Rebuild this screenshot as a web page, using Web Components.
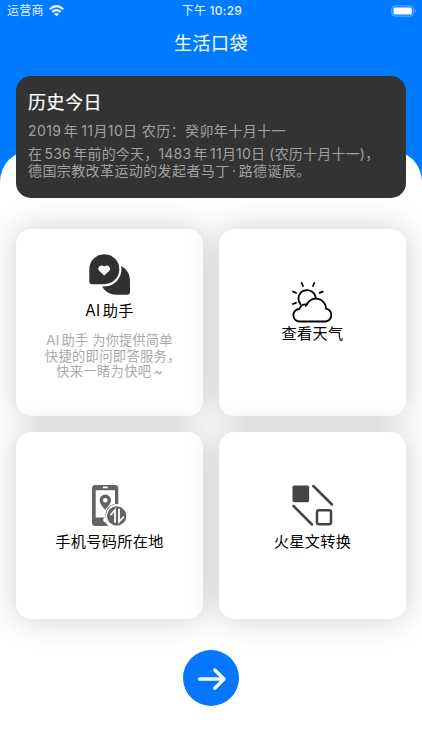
<!DOCTYPE html>
<html lang="zh-CN">
<head>
<meta charset="utf-8">
<title>生活口袋</title>
<style>
html,body{margin:0;height:100%}
body{font-family:Inter,"Noto Sans CJK SC",sans-serif;background:#fff;overflow:hidden}
</style>
</head>
<body>
<pocket-app></pocket-app>
<script>
const define = (name, html) => {
  const t = document.createElement('template');
  t.innerHTML = html;
  customElements.define(name, class extends HTMLElement {
    constructor() {
      super();
      this.attachShadow({ mode: 'open' }).append(t.content.cloneNode(true));
    }
  });
};

define('status-bar', `
<style>
:host{display:grid;grid-template-columns:1fr auto 1fr;align-items:center;height:22px;padding:0 5px 0 7px;color:#e4f1ff;font-size:12px;line-height:22px}
.left{display:flex;align-items:center;gap:5px}
.left span{letter-spacing:.3px}
.time{font-weight:500;letter-spacing:.3px}
.time b{font-weight:400;margin-right:3px}
.battery{justify-self:end}
svg{display:block}
</style>
<div class="left"><span>运营商</span>
<svg width="15" height="12" viewBox="0 0 15 12" fill="none" stroke="#f2f8ff" stroke-width="2.200"><path d="M.8 4.300Q7.500-1.900 14.200 4.300"/><path d="M3.300 7Q7.500 3.100 11.700 7"/><path d="M7.500 11.300 5 8.900Q7.500 7 10 8.900Z" fill="#f2f8ff" stroke="none"/></svg></div>
<div class="time"><b>下午</b>10:29</div>
<svg class="battery" width="26" height="12" viewBox="0 0 26 12"><rect x=".9" y=".9" width="21.400" height="10.200" rx="3" fill="none" stroke="#6fb3ff" stroke-width="1"/><rect x="2.500" y="2.500" width="18.300" height="7" rx="1.500" fill="#fff"/><path d="M23.800 4.200v3.600q1.200-.5 1.200-1.800t-1.200-1.800z" fill="#6fb3ff"/></svg>`);

define('nav-title', `
<style>:host{display:block;height:54px;line-height:43px;text-align:center;color:#eef8ff;font-size:18px;-webkit-text-stroke:.12px;letter-spacing:.5px}</style><slot></slot>`);

define('today-card', `
<style>
:host{display:block;box-sizing:border-box;height:122px;padding:13px 12px;border-radius:15px;background:#333;color:#a1a1a1;font-size:14px;letter-spacing:.4px;white-space:nowrap}
h1{margin:0;font-size:18px;font-weight:400;-webkit-text-stroke:.2px;line-height:27px;letter-spacing:.5px;color:#fff}
.date{line-height:20px;margin-top:5px}
.body{line-height:17px;margin-top:4px}
</style>
<h1><slot name="title"></slot></h1><div class="date"><slot name="date"></slot></div><div class="body"><slot></slot></div>`);

define('tool-card', `
<style>
:host{display:flex;flex-direction:column;align-items:center;box-sizing:border-box;height:187px;padding-top:var(--top,53px);border-radius:15px;background:#fff;box-shadow:0 0 32px rgba(0,0,0,.2);color:#000}
.icon{height:41px;margin-bottom:var(--gap,5px)}
.label{font-size:15.200px;line-height:22px;letter-spacing:.3px;white-space:nowrap}
::slotted(svg){display:block}
::slotted(p){margin:11px 0 0;text-align:center;font-size:13.300px;line-height:15.700px;letter-spacing:.3px;color:#aaa;white-space:nowrap}
</style>
<div class="icon"><slot name="icon"></slot></div><div class="label"><slot></slot></div><slot name="note"></slot>`);

define('next-button', `
<style>:host{display:block;width:56px;height:56px;margin:31px auto 0;border-radius:50%;background:#0577ff}svg{display:block}</style>
<svg width="56" height="56" viewBox="0 0 56 56" fill="none" stroke="#f4faff" stroke-width="3.400" stroke-linecap="round" stroke-linejoin="round"><path d="M16.600 29H41M31.800 20 41 29 31.800 38.200"/></svg>`);

define('pocket-app', `
<style>
:host{display:block;height:750px;background:linear-gradient(#007aff 0 185px,#fff 185px)}
.sheet{height:600px;margin:74px 0 0;border-radius:32px 32px 0 0;background:#fff}
header{height:76px}
main{padding:0 16px;z-index:1}
.stage{display:grid}
.stage>*{grid-area:1/1;min-width:0}
.grid{display:grid;grid-template-columns:187px 187px;gap:16px;margin-top:31px}
.ai{--top:25px;--gap:5px}
.weather{--gap:0px}
/* narrow gap between Latin and Han runs */
i{margin-left:2.300px}
.tight{word-spacing:-2px}
/* trailing comma set at half width */
.half{font-feature-settings:"halt"}
.pull{margin-left:-3.500px}
</style>
<header><status-bar></status-bar><nav-title>生活口袋</nav-title></header>
<div class="stage">
<div class="sheet"></div>
<main>
<today-card><span slot="title">历史今日</span><span slot="date">2019<i></i>年<i></i> <span class="pull">11月10日</span> 农历：癸卯年十月十一</span><span style="letter-spacing:.2px">在<i></i>536<i></i>年前的今天，1483<i></i>年<i></i>11月10日 (农历十月十一)<span class="half">，</span></span><br>德国宗教改革运动的发起者马丁<span class="tight"> · </span>路德诞辰。</today-card>
<div class="grid">
<tool-card class="ai">
<svg slot="icon" width="42" height="41" viewBox="0 0 42 41" fill="#303030"><path d="M.3 15.200a15 15 0 1 1 15 15H3.300q-3 0-3-3z"/><path d="M32.200 12C37.700 15 41 20 41 26.500V37.700q0 3-3 3H27C20.500 40.500 15.500 37 13 32.300c11.500 1.600 21-8 19.200-20.300z"/><path d="M15.200 21.500l-4.900-4.400c-3-3.200 1.600-8 4.900-4.500 3.300-3.500 7.900 1.300 4.900 4.500z" fill="#fff"/></svg>
AI<i></i>助手<p slot="note"><span style="letter-spacing:.1px">AI<i></i>助手 为你提供简单</span><br>快捷的即问即答服务<span class="half">，</span><br>快来一睹为快吧<i></i>~</p></tool-card>
<tool-card class="weather">
<svg slot="icon" width="42" height="41" viewBox="0 0 42 41" fill="none" stroke="#000" stroke-width="1.800" stroke-linecap="round" stroke-linejoin="round"><path d="M7.800 39.500a6.200 6.200 0 0 1-.4-12.500A6.500 6.500 0 0 1 14.700 22.500 10.200 10.200 0 0 1 34.100 26.600 6.600 6.600 0 0 1 34 39.500Z"/><path d="M8.500 22.200A8.600 8.600 0 1 1 23.700 16.200M14.700 22.500l-1.100 1.500M9.700 1l1.300 3M22.300 1l-1.300 3M1 9.500l3 1.300M30.700 9.600l-3 1.300M1 22l3-1.100"/></svg>查看天气</tool-card>
<tool-card>
<svg slot="icon" width="42" height="41" viewBox="0 0 42 41"><path fill="#636363" fill-rule="evenodd" d="M6.500 0H26q3.300 0 3.300 3.300V19.200A10.500 10.500 0 0 0 17.200 33c-1.500-.8-3.200.4-3 2 0 1.500 1.200 2.400 2.600 2.300.4 1.400 1.300 2.600 2.400 3.700H6.500Q3 41 3 37.700V3.300Q3 0 6.500 0ZM6.700 5.300V32.500H17Q16 22.500 26 19.200V5.300ZM14 1.500h4.700v1.700H14Z"/><path fill="#636363" fill-rule="evenodd" d="M16.300 25C12.500 20.500 10.600 17.900 10.600 15.300a5.700 5.700 0 0 1 11.400 0C22 17.900 20 20.500 16.300 25ZM16.300 13a2.300 2.300 0 1 0 0 4.600 2.300 2.300 0 0 0 0-4.600Z"/><circle cx="27.700" cy="31" r="9.700" fill="#636363"/><path d="M21.500 30.200 26 25v12.800M30 23.800v13l5-5.300" fill="none" stroke="#fff" stroke-width="1.800"/></svg>手机号码所在地</tool-card>
<tool-card>
<svg slot="icon" width="42" height="41" viewBox="0 0 42 41" fill="none" stroke="#444" stroke-width="2.500" stroke-linecap="round"><rect x=".5" y=".4" width="16.600" height="16.800" rx="1.800" fill="#444" stroke="none"/><path d="M21.300 1 40 19.500M1.500 21 20 39.500"/><rect x="25" y="25.300" width="14" height="14" rx="2"/></svg>火星文转换</tool-card>
</div>
<next-button></next-button>
</main>
</div>`);
</script>
</body>
</html>
